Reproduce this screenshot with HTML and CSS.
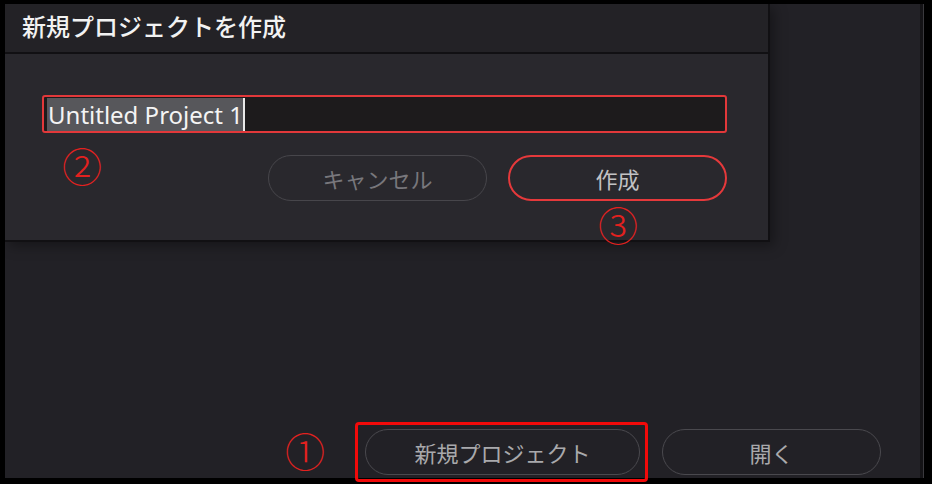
FILE: index.html
```html
<!DOCTYPE html>
<html lang="ja">
<head>
<meta charset="utf-8">
<title>新規プロジェクトを作成</title>
<link rel="stylesheet" href="styles.css">
</head>
<body>
<div class="window">
  <div class="dialog">
    <div class="dialog-title">新規プロジェクトを作成</div>
    <div class="dialog-body">
      <div class="field"><span class="sel">Untitled Project 1</span><span class="caret"></span></div>
      <div class="actions">
        <button class="btn btn-muted">キャンセル</button>
        <div class="create-wrap">
          <button class="btn btn-red">作成</button>
          <span class="mark mark-3">③</span>
        </div>
      </div>
      <span class="mark mark-2">②</span>
    </div>
  </div>
  <div class="footer">
    <span class="mark mark-1">①</span>
    <div class="highlight">
      <button class="btn btn-foot">新規プロジェクト</button>
    </div>
    <button class="btn btn-foot">開く</button>
  </div>
</div>
</body>
</html>
```
FILE: styles.css
```css
html, body {
  margin: 0;
  padding: 0;
  background: #000;
  width: 932px;
  height: 484px;
  overflow: hidden;
  font-family: "Noto Sans CJK JP", "Noto Sans", sans-serif;
}
.window {
  margin: 4px 0 0 5px;
  width: 918px;
  height: 474px;
  background: #222126;
  border-right: 3px solid #141316;
  box-shadow: 1px 0 0 #3a393d;
  display: flex;
  flex-direction: column;
  box-sizing: border-box;
}
.dialog {
  width: 765px;
  background: #29282d;
  border-right: 2px solid #111013;
  border-bottom: 2px solid #111013;
  box-sizing: border-box;
  box-shadow: 4px 4px 12px rgba(0,0,0,0.35);
}
.dialog-title {
  height: 48px;
  background: #232226;
  color: #f2f2f2;
  font-size: 24px;
  font-weight: 500;
  line-height: 44px;
  padding-left: 17px;
  border-bottom: 2px solid #111013;
}
.dialog-body {
  position: relative;
  padding: 41px 41px 0 37px;
  height: 186px;
  box-sizing: border-box;
}
.field {
  height: 38px;
  border: 2px solid #e2383a;
  border-radius: 3px;
  background: #1d1b1c;
  box-sizing: border-box;
  display: flex;
  align-items: center;
  padding-left: 3px;
}
.sel {
  background: #57575b;
  color: #f4f4f4;
  font-family: "Noto Sans", sans-serif;
  font-size: 24px;
  line-height: 33px;
  height: 33px;
  padding: 0 0 0 1px;
}
.caret {
  width: 2px;
  height: 33px;
  background: #e8e8e8;
}
.actions {
  display: flex;
  justify-content: flex-end;
  gap: 21px;
  margin-top: 22px;
}
.btn {
  width: 219px;
  height: 46px;
  border-radius: 23px;
  background: transparent;
  font-family: "Noto Sans CJK JP", "Noto Sans", sans-serif;
  font-size: 22px;
  padding: 0;
  box-sizing: border-box;
}
.btn-muted {
  border: 1.5px solid #47464b;
  color: #78777c;
}
.btn-red {
  border: 2px solid #e5393b;
  color: #c2c2c4;
}
.create-wrap {
  position: relative;
}
.mark {
  position: absolute;
  color: #e3211f;
  font-family: "Noto Sans CJK JP", sans-serif;
  font-size: 40px;
  line-height: 1;
  font-weight: 300;
}
.mark-2 {
  left: 57px;
  top: 91px;
}
.mark-3 {
  left: 90px;
  top: 49px;
}
.footer {
  margin-top: auto;
  display: flex;
  align-items: center;
  justify-content: flex-end;
  padding: 0 39px 3px 0;
  gap: 22px;
}
.footer .mark {
  position: static;
  margin-right: 18px;
  margin-bottom: 4px;
}
.highlight {
  position: relative;
}
.highlight::after {
  content: "";
  position: absolute;
  left: -10px;
  right: -8px;
  top: -7px;
  bottom: -7px;
  border: 3px solid #f20a0a;
  border-radius: 4px;
}
.btn-foot {
  border: 1.5px solid #4a494e;
  color: #a9a9ac;
}
.highlight .btn-foot {
  width: 275px;
}
```
